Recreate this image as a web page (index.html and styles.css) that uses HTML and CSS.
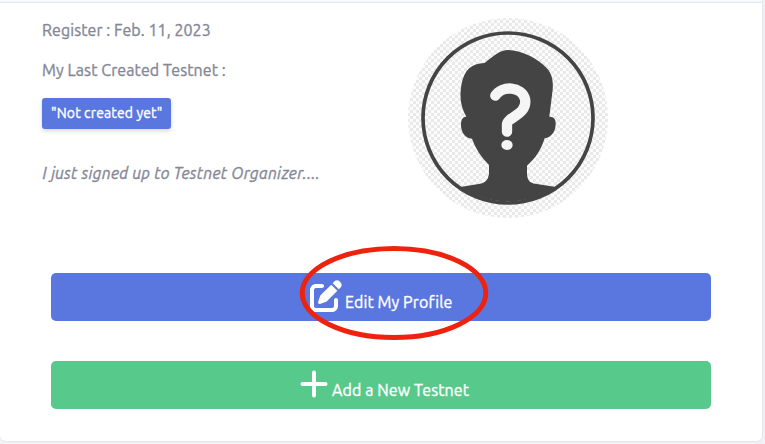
FILE: index.html
```html
<!DOCTYPE html>
<html lang="en">
<head>
<meta charset="utf-8">
<title>Testnet Organizer</title>
<link rel="stylesheet" href="styles.css">
</head>
<body>
<main class="card">
  <div class="card-header"></div>
  <div class="card-body">
    <section class="profile">
      <div class="details">
        <p><span class="t-register">Register : Feb. 11, 2023</span></p>
        <p><span class="t-last">My Last Created Testnet :</span></p>
        <a class="badge"><span class="t-badge">"Not created yet"</span></a>
        <p class="bio"><span class="t-bio">I just signed up to Testnet Organizer....</span></p>
      </div>
      <svg class="avatar" viewBox="24 24 600 600">
        <defs>
          <pattern id="checks" x="3" y="3" width="18" height="18" patternUnits="userSpaceOnUse">
            <rect width="18" height="18" fill="#fcfcfc"/>
            <path d="M0 0h9v9H0zM9 9h9v9H9z" fill="#e9e9e9"/>
          </pattern>
        </defs>
        <circle cx="324" cy="324" r="300" fill="url(#checks)"/>
        <circle cx="324" cy="324" r="255" fill="url(#checks)" stroke="#444" stroke-width="11"/>
        <path fill="#444" d="M181 531L240 521Q264 517 267 491V465Q231 429 216 386C193 384 183 364 183 344C183 329 188 320 199 320C182 291 178 261 184 226C192 180 214 160 254 159C278 139 300 120 325 120C362 121 415 145 442 176C457 193 460 215 458 239L448 320C462 319 468 329 467 343C466 365 455 382 434 385C422 421 409 442 381 467V491C382 510 389 519 406 521L468 531A257 257 0 0 1 181 531Z"/>
        <path d="M286 257C305 225 366 229 375 267C384 313 322 321 321 343V365" fill="none" stroke="#f5f5f5" stroke-width="31" stroke-linecap="round" stroke-linejoin="round"/>
        <ellipse cx="321" cy="405" rx="17" ry="15" fill="#f5f5f5"/>
      </svg>
    </section>
    <a class="button primary">
      <svg class="icon" viewBox="0 0 512 512"><path fill="currentColor" d="M471.600 21.700c-21.900-21.900-57.300-21.900-79.200 0L362.300 51.700l97.900 97.900 30.100-30.100c21.900-21.900 21.900-57.300 0-79.200L471.600 21.700zm-299.200 220c-6.100 6.100-10.800 13.600-13.500 21.900l-29.600 88.800c-2.900 8.600-.6 18.100 5.800 24.600s15.900 8.700 24.600 5.800l88.800-29.600c8.200-2.700 15.700-7.400 21.900-13.500L437.700 172.300 339.700 74.300 172.400 241.700zM96 64c-53 0-96 43-96 96V416c0 53 43 96 96 96H352c53 0 96-43 96-96V320c0-17.700-14.300-32-32-32s-32 14.300-32 32v96c0 17.700-14.300 32-32 32H96c-17.700 0-32-14.300-32-32V160c0-17.700 14.300-32 32-32h96c17.700 0 32-14.300 32-32s-14.300-32-32-32H96z"/></svg>
      <span class="t-edit">Edit My Profile</span>
      <svg class="marker" viewBox="0 0 190 96"><ellipse cx="95" cy="48" rx="91.800" ry="44.500" fill="none" stroke="#ee220f" stroke-width="5"/></svg>
    </a>
    <a class="button success">
      <svg class="icon plus" viewBox="0 0 28 32"><path d="M14 4.500v23M2.500 16h23" fill="none" stroke="currentColor" stroke-width="4" stroke-linecap="round"/></svg>
      <span class="t-add">Add a New Testnet</span>
    </a>
  </div>
</main>
</body>
</html>
```
FILE: styles.css
```css
* { box-sizing: border-box; }
body {
  margin: 0;
  height: 444px;
  overflow: hidden;
  background: #f2f2f5;
  color: #858796;
  font: 16px/24px Ubuntu, "Noto Sans", sans-serif;
  -webkit-text-stroke: 0.35px currentColor;
}
.card {
  width: 763px;
  height: 442px;
  background: #fff;
  border: 1px solid #e3e6f0;
  border-width: 0 1px 1px 0;
  border-radius: 0 0 6px 6px;
}
.card-header { height: 3px; background: #f8f9fc; border-bottom: 1px solid #e3e6f0; }
.card-body { padding: 15px 51px 0; }
.profile { display: flex; height: 255px; margin-left: -9px; }
.details { width: 366px; }
p { margin: 0 0 16px; white-space: nowrap; }
span { display: inline-block; white-space: nowrap; }
.t-register { letter-spacing: 0.07px; }
.t-last { letter-spacing: 0.09px; }
.t-badge { letter-spacing: 0.12px; }
.t-bio { letter-spacing: 0.27px; }
.t-edit { letter-spacing: 0.1px; }
.t-add { letter-spacing: 0.1px; }
.badge {
  display: flex;
  width: 129px;
  height: 31px;
  padding-left: 9px;
  border-radius: 3px;
  background: #5a76df;
  color: #fff;
  font-size: 14px;
  line-height: 31px;
  box-shadow: 0 2px 4px rgba(58, 59, 69, .2);
}
.bio { margin-top: 32px; padding-left: 0.6px; font-style: italic; }
.avatar { width: 200px; height: 200px; }
.button {
  position: relative;
  display: flex;
  width: 660px;
  height: 48px;
  border-radius: 5px;
  color: #fff;
}
.button span { margin-top: 17px; margin-left: 4px; }
.primary { background: #5a76df; padding-left: 259px; }
.primary span { margin-left: 3px; }
.success { background: #57c98b; margin-top: 40px; padding-left: 249px; }
.icon { width: 32px; height: 32px; margin-top: 7px; }
.plus { width: 28px; }
.marker { position: absolute; left: 248px; top: -28px; width: 190px; height: 96px; }
```
